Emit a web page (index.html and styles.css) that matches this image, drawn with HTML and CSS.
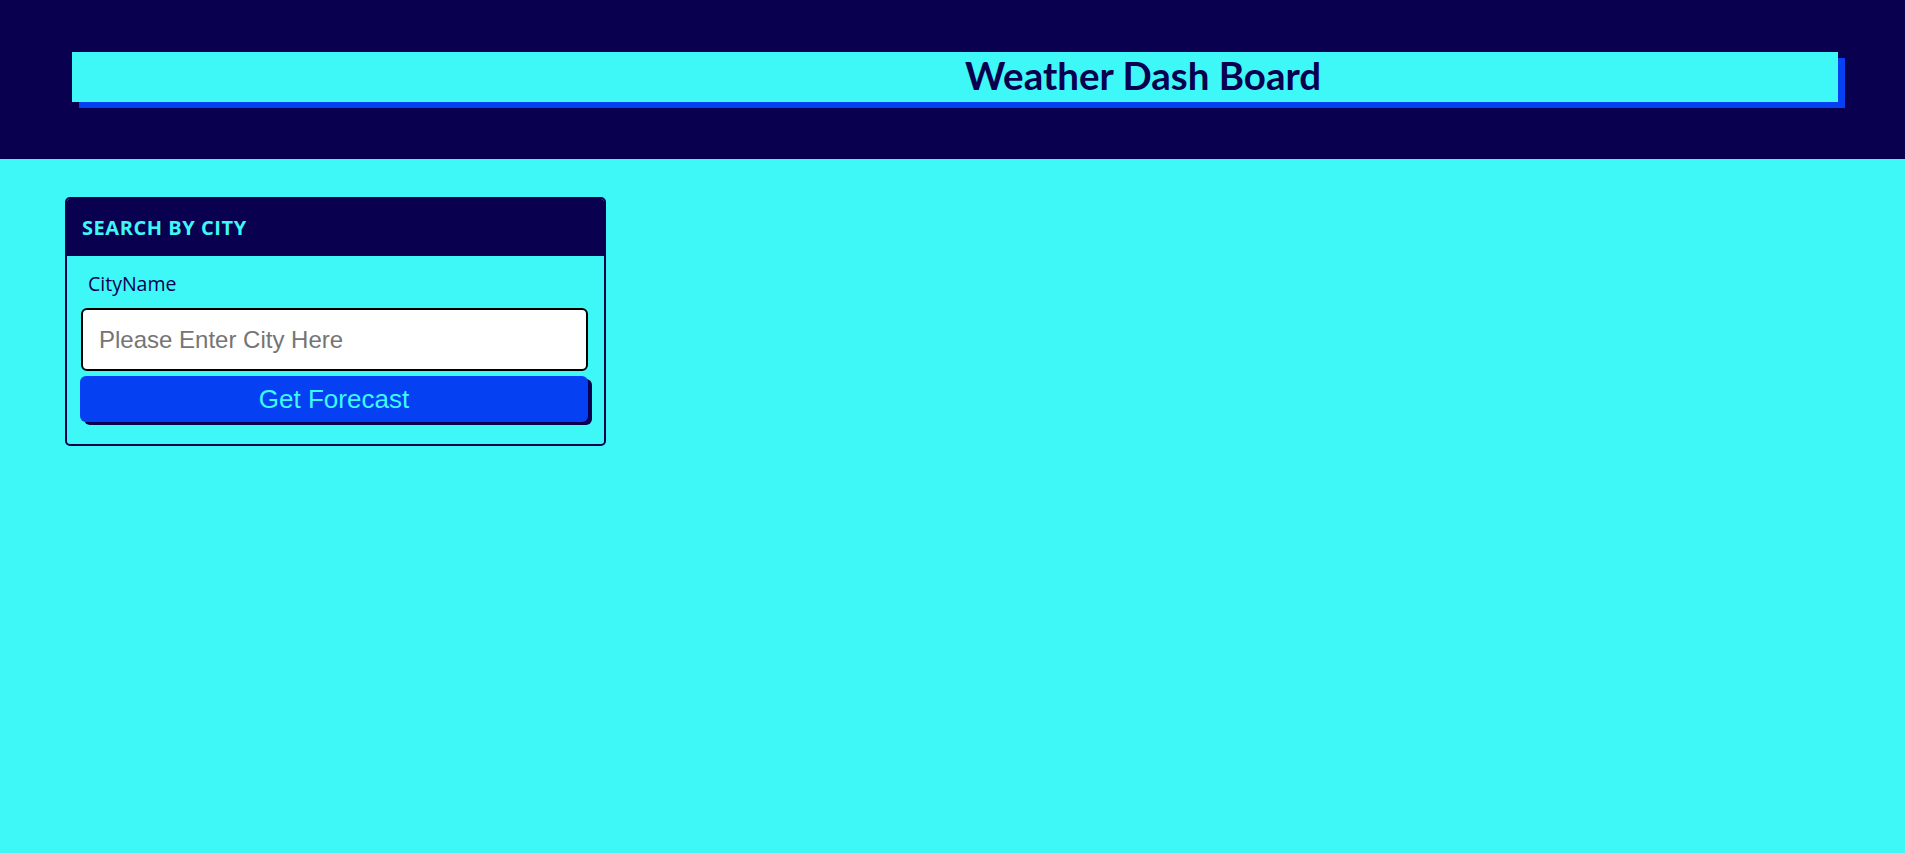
FILE: index.html
```html
<!DOCTYPE html>
<html lang="en">
<head>
<meta charset="utf-8">
<title>Weather Dash Board</title>
<link rel="stylesheet" href="styles.css">
</head>
<body>
<header class="site-header">
  <div class="title-bar">
    <h1 class="title">Weather Dash Board</h1>
  </div>
</header>
<main class="main">
  <section class="card">
    <div class="card-header">SEARCH BY CITY</div>
    <div class="card-body">
      <label class="label" for="city">CityName</label>
      <input class="city-input" id="city" type="text" placeholder="Please Enter City Here">
      <button class="btn" type="button">Get Forecast</button>
    </div>
  </section>
</main>
</body>
</html>
```
FILE: styles.css
```css
html, body {
  margin: 0;
  padding: 0;
  background: #3ef8f8;
  min-height: 100%;
}
body {
  font-family: "Open Sans", "Noto Sans", sans-serif;
  color: #0a0050;
}
.site-header {
  background: #0a0050;
  height: 159px;
  box-sizing: border-box;
  padding: 52px 67px 0 72px;
}
.title-bar {
  background: #3ef8f8;
  height: 50px;
  box-shadow: 7px 6px 0 #0540f2;
  display: flex;
  align-items: flex-start;
  padding-left: 893px;
}
.title {
  margin: 0;
  font-family: Lato, "Open Sans", sans-serif;
  font-weight: 700;
  font-size: 38.5px;
  line-height: 46px;
  color: #0a0050;
  letter-spacing: 0;
}
.main {
  padding: 38px 0 0 65px;
}
.card {
  width: 541px;
  box-sizing: border-box;
  border: 2px solid #0a0050;
  border-radius: 5px;
  overflow: hidden;
}
.card-header {
  background: #0a0050;
  color: #3ef8f8;
  height: 57px;
  box-sizing: border-box;
  padding: 0 15px;
  display: flex;
  align-items: center;
  font-weight: 700;
  font-size: 20px;
  letter-spacing: 0.55px;
}
.card-body {
  display: flex;
  flex-direction: column;
  padding: 16px 16px 22px 14px;
}
.label {
  font-family: "Open Sans", sans-serif;
  font-size: 19.5px;
  line-height: 24px;
  padding-left: 7px;
  margin-bottom: 12px;
  color: #0a0050;
}
.city-input {
  height: 63px;
  box-sizing: border-box;
  border: 2px solid #000;
  border-radius: 6px;
  background: #fff;
  padding: 0 0 0 16px;
  font-family: "Liberation Sans", Arial, sans-serif;
  font-size: 24px;
  color: #222;
  outline: none;
  margin: 0;
}
.city-input::placeholder {
  color: #757575;
}
.btn {
  margin-top: 5px;
  margin-left: -1px;
  height: 46px;
  border: none;
  border-radius: 6px;
  background: #0540f2;
  color: #3ef8f8;
  font-family: "Liberation Sans", Arial, sans-serif;
  font-size: 26px;
  box-shadow: 4px 3px 0 #0a0050;
  padding: 0;
  cursor: pointer;
}
```
